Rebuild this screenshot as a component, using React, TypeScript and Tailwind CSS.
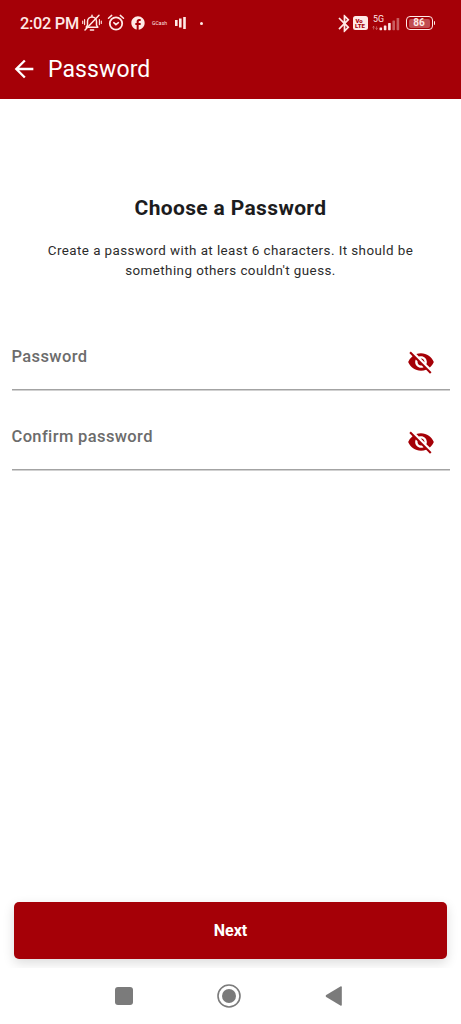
import { MdArrowBack, MdBluetooth, MdFacebook, MdVisibilityOff } from "react-icons/md";

function BellOffIcon() {
  return (
    <svg width="20" height="18" viewBox="0 0 20 18" fill="none" stroke="currentColor" strokeWidth="1.5" strokeLinecap="round">
      <path d="M4.2 13.2h11.6l-1.3-2V7.4a4.5 4.5 0 0 0-9 0v3.8z" strokeLinejoin="round" />
      <path d="M8.4 16h3.2M10 1.2v1.4M17 1.2 3 16" />
      <path d="M2.6 5.6v5M.7 7v2.4M17.4 5.6v5M19.3 7v2.4" strokeWidth="1.1" />
    </svg>
  );
}

function AlarmIcon() {
  return (
    <svg width="18" height="18" viewBox="0 0 18 18" fill="none" stroke="currentColor" strokeLinecap="round">
      <circle cx="9" cy="9.5" r="6.2" strokeWidth="1.8" />
      <path d="m1.5 4.3 3.2-2.9M16.5 4.3l-3.2-2.9" strokeWidth="1.5" />
      <path d="m6.8 8.7 2.1 1.9 2.5-1.9" strokeWidth="1.6" />
    </svg>
  );
}

function SignalIcon() {
  return (
    <svg width="30" height="18" viewBox="0 0 30 18" fill="currentColor">
      <text x="1" y="8" fontSize="8.8" fontFamily="Roboto, sans-serif">5G</text>
      <path d="M1.6 12.5v3M.5 13.5l1.1-1.2 1.1 1.2M4.6 12.3v3M3.5 14.3l1.1 1.2 1.1-1.2" fill="none" stroke="currentColor" strokeWidth=".6" opacity=".6" />
      <rect x="7.5" y="13.5" width="2.6" height="2.7" rx=".6" />
      <rect x="11.8" y="11.5" width="2.6" height="4.7" rx=".6" />
      <rect x="16.1" y="9" width="2.6" height="7.2" rx=".6" />
      <rect x="20.4" y="6.5" width="2.6" height="9.7" rx=".6" opacity=".4" />
      <rect x="24.6" y="4" width="2.6" height="12.2" rx=".6" opacity=".4" />
    </svg>
  );
}

function StatusBar() {
  return (
    <div className="flex h-[46px] items-center pl-5 pr-[25px] text-[#ffe9e6]">
      <span className="mt-[2px] w-[62px] whitespace-nowrap text-[16.3px] font-medium leading-none tracking-[-0.25px]">2:02 PM</span>
      <BellOffIcon />
      <div className="ml-[5px]">
        <AlarmIcon />
      </div>
      <MdFacebook size={16} className="ml-[5px]" />
      <span className="ml-[6px] w-[17px] whitespace-nowrap text-[5px] leading-none tracking-[0.1px]">GCash</span>
      <svg className="ml-[6px]" width="11" height="12" viewBox="0 0 11 12" fill="currentColor">
        <rect x="0" y="3" width="2.6" height="6" />
        <rect x="4" y="1.5" width="2.6" height="9" />
        <rect x="8.2" y="0" width="2.6" height="12" />
      </svg>
      <span className="ml-[14px] size-[3px] rounded-full bg-current" />
      <div className="ml-auto flex items-center">
        <MdBluetooth size={21} className="-mr-px" />
        <div className="-ml-px flex h-[14px] w-[15px] flex-col justify-center rounded-[2.5px] bg-[#ffe9e6] text-center text-[6px] font-black leading-[5.5px] text-[#a50007]">
          <span className="pr-[2px]">Vo</span>
          <span>LTE</span>
        </div>
        <div className="ml-[4px]">
          <SignalIcon />
        </div>
        <div className="ml-[4px] flex h-[14px] w-[27px] items-center justify-center rounded-[4px] border-[1.5px] border-current px-[2px]">
          <span className="flex h-[9px] w-full items-center justify-center rounded-[2px] bg-white/30 text-[10px] font-bold leading-none">86</span>
        </div>
        <span className="ml-px mr-px h-[4px] w-[1.5px] rounded-r bg-current" />
      </div>
    </div>
  );
}

function PasswordField({ label }: { label: string }) {
  return (
    <div className="flex h-[80px] items-start justify-between pr-[15px] shadow-[inset_0_-1px_0_#a3a3a3,0_0.5px_0_#a3a3a3]">
      <label className="mt-[37px] text-[16.5px] font-medium leading-5 tracking-[0.37px] text-[#6c6c6c]">{label}</label>
      <MdVisibilityOff size={28} className="mt-[38px] text-[#a50007]" />
    </div>
  );
}

export default function App() {
  return (
    <div className="flex h-[1024px] w-[461px] flex-col overflow-hidden bg-white font-['Roboto',sans-serif]">
      <header className="h-[98.5px] shrink-0 bg-[#a50007] text-white">
        <StatusBar />
        <div className="flex h-[46px] items-center pl-[9.5px]">
          <MdArrowBack size={28} />
          <h1 className="ml-[10.5px] mt-px text-[23px] leading-none tracking-[0.1px]">Password</h1>
        </div>
      </header>
      <main className="flex grow flex-col">
        <h2 className="mt-[95px] text-center text-[21px] font-bold leading-7 tracking-[0.35px] text-[#1c1c1e]">Choose a Password</h2>
        <p className="mt-[19px] text-center text-[13.4px] leading-5 tracking-[0.43px] text-[#2c2c2c]">
          Create a password with at least 6 characters. It should be
          <br />
          something others couldn't guess.
        </p>
        <div className="ml-[11.5px] mr-[11.5px] mt-[29.5px]">
          <PasswordField label="Password" />
          <PasswordField label="Confirm password" />
        </div>
        <div className="mt-auto overflow-hidden px-[14px] pb-[9px] pt-4">
          <button className="h-[57px] w-full rounded-[5px] bg-[#a50007] text-[16px] font-bold text-white shadow-[0_4px_12px_rgba(0,0,0,0.14)]">Next</button>
        </div>
      </main>
      <nav className="flex h-14 shrink-0 items-center text-[#7b7b7b]">
        <span className="ml-[115px] size-[17.5px] rounded-[3px] bg-current" />
        <svg className="ml-[84px]" width="24" height="24" viewBox="0 0 24 24">
          <circle cx="12" cy="12" r="11" fill="none" stroke="currentColor" strokeWidth="1.6" />
          <circle cx="12" cy="12" r="7" fill="currentColor" />
        </svg>
        <svg className="ml-[84px]" width="18" height="20" viewBox="0 0 18 20" fill="currentColor">
          <path d="M1.2 9.1 15.4.4Q16.8-.2 16.8 1.3v17.4q0 1.5-1.4.9L1.2 10.9Q.2 10 1.2 9.1Z" />
        </svg>
      </nav>
    </div>
  );
}
